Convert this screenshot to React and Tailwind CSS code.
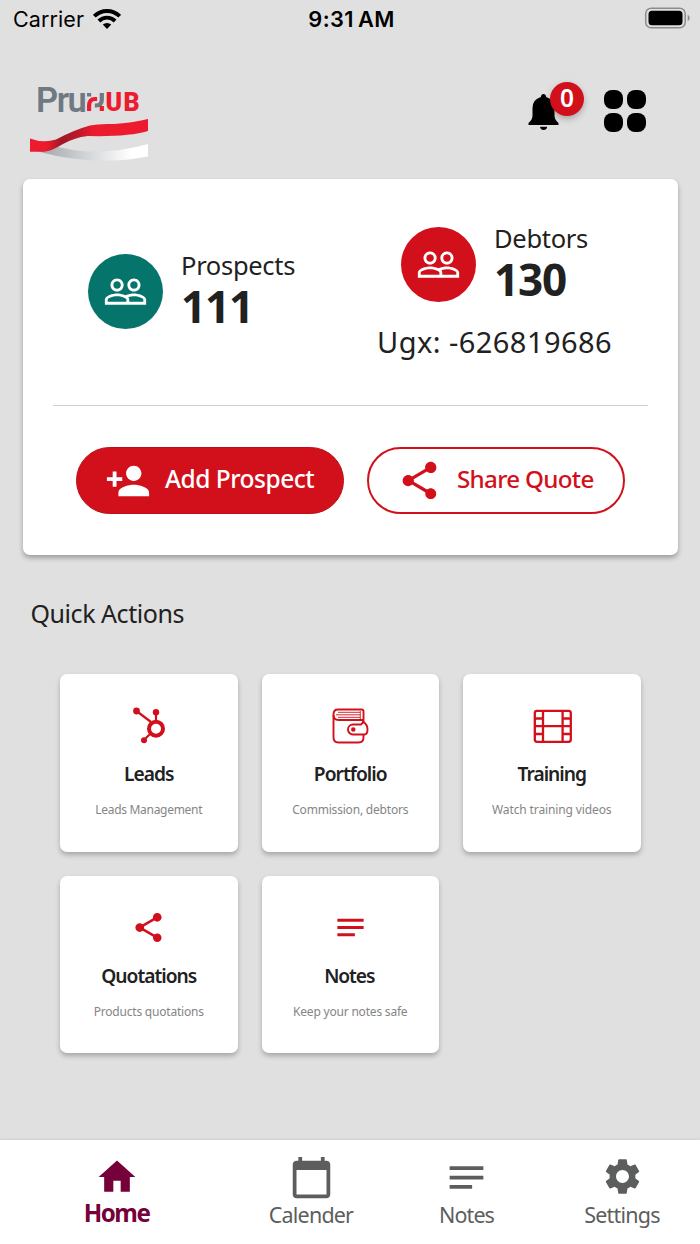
import { MdHome, MdCalendarToday, MdNotes, MdSettings, MdShare, MdPersonAdd, MdPeopleOutline } from "react-icons/md";

function StatusBar() {
  return (
    <div className="grid h-[40px] grid-cols-[1fr_auto_1fr] items-center pl-[13px] pr-[10px] font-['Inter',sans-serif] text-black">
      <div className="flex items-center gap-[9px]">
        <span className="-mt-[2px] text-[21.500px] leading-[40px] tracking-[0.100px]">Carrier</span>
        <svg className="-mt-[3px] h-[20px] w-[28px]" viewBox="0 0 28 20">
          <g fill="none" stroke="#000" strokeWidth="3.900">
            <path d="M1.300 7.200a18 18 0 0 1 25.400 0" />
            <path d="M5.900 12a11.500 11.500 0 0 1 16.200 0" />
          </g>
          <path d="M14 20l-4.200-4.400a6 6 0 0 1 8.400 0z" />
        </svg>
      </div>
      <span className="-mt-[2px] text-[21.800px] font-semibold leading-[40px] tracking-[0.400px]">9:31<span className="ml-[4px]">AM</span></span>
      <svg className="-mt-[5px] h-[22px] w-[46px] justify-self-end" viewBox="0 0 46 22">
        <rect x="1.700" y="1.200" width="39.500" height="19.600" rx="5.500" fill="none" stroke="#8c8c8c" strokeWidth="1.500" />
        <rect x="4.500" y="3.800" width="34" height="14.400" rx="3.500" />
        <path d="M43.700 7.500q4 3.500 0 7z" fill="#8c8c8c" />
      </svg>
    </div>
  );
}

function Logo() {
  return (
    <div className="w-[118px]">
      <div className="flex h-[40px] items-start pl-[6px] pt-[2px] font-['Roboto',sans-serif]">
        <span className="w-[51px] shrink-0 text-[34.500px] font-semibold leading-[40px] tracking-[-1.500px] text-[#6f7983]">Pru</span>
        <svg className="mt-[13px] h-[18px] w-[17px] shrink-0" viewBox="0 0 17 18" fill="none" strokeWidth="4.200">
          <path d="M2.100 0v3.500M14.800 0v6.500q0 6-5.800 6H7.800" stroke="#6f7983" />
          <path d="M2.100 18v-5.500q0-6.500 6-6.500h2M14.800 18v-5" stroke="#ed1b2e" />
        </svg>
        <span className="ml-[1.500px] shrink-0 text-[25px] font-black leading-[45px] tracking-[1.500px] text-[#ed1b2e]">UB</span>
      </div>
      <svg className="block h-[44px] w-[118px]" viewBox="0 0 118 44">
        <defs>
          <linearGradient id="silver">
            <stop offset="0.050" stopColor="#a4aaae" />
            <stop offset="0.450" stopColor="#d3d6d8" />
            <stop offset="0.850" stopColor="#fff" />
          </linearGradient>
          <linearGradient id="ribbon">
            <stop offset="0.140" stopColor="#ed1b2e" />
            <stop offset="0.270" stopColor="#a01725" />
            <stop offset="0.420" stopColor="#bf1a2b" />
            <stop offset="0.540" stopColor="#ed1b2e" />
          </linearGradient>
        </defs>
        <path d="M8 33.500L24 28Q68 40 118 26V38.500Q64 49 8 33.500Z" fill="url(#silver)" />
        <path d="M0 20.500Q13 25.500 26 21.500Q45 11.500 60 7.500Q68 5.500 84 6Q102 5 118 1V13Q98 19 58 18Q44 19.500 32 26.500Q22 33 14 33.700H0Z" fill="url(#ribbon)" />
      </svg>
    </div>
  );
}

function BellIcon() {
  return (
    <svg className="h-[38px] w-[31px]" viewBox="0 0 31 38">
      <path d="M15.500 1q2.300 0 2.700 3Q26.500 6.500 26.500 15v7.500q0 4 4 7.500v2H.5v-2q4-3.500 4-7.500V15q0-8.500 8.300-11 .4-3 2.700-3z" />
      <path d="M12 33.700h7.200q-.6 3.300-3.600 3.300T12 33.700z" />
    </svg>
  );
}

function Header() {
  return (
    <header className="flex h-[139px] items-start justify-between pl-[30px] pr-[54px] pt-[38px]">
      <Logo />
      <div className="flex items-start pt-[3px]">
        <div className="relative mt-[12px] h-[38px] w-[31px]">
          <BellIcon />
          <span className="absolute left-[22px] top-[-11px] flex h-[34px] w-[34px] items-center justify-center rounded-full bg-[#d2101b] text-[24.500px] font-semibold leading-[34px] text-white shadow-[0_3px_6px_rgba(0,0,0,0.250)]">
            <span className="-mt-[3px]">0</span>
          </span>
        </div>
        <div className="ml-[45px] mt-[9px] grid grid-cols-2 gap-[4px]">
          <i className="size-[19px] rounded-[8px] bg-black" />
          <i className="size-[19px] rounded-[8px] bg-black" />
          <i className="size-[19px] rounded-[8px] bg-black" />
          <i className="size-[19px] rounded-[8px] bg-black" />
        </div>
      </div>
    </header>
  );
}

function Stat({ label, value, badge }) {
  return (
    <div className="flex">
      <div className={`flex size-[75px] items-center justify-center rounded-full text-white ${badge}`}>
        <MdPeopleOutline size={45} />
      </div>
      <div className="ml-[17px] flex flex-col">
        <span className="-mt-[5px] ml-[1px] text-[25.500px] leading-[32px] tracking-[-0.300px]">{label}</span>
        <span className="ml-[1px] text-[44px] font-bold leading-[50px] tracking-[-1.200px]">{value}</span>
      </div>
    </div>
  );
}

function SummaryCard() {
  return (
    <section className="mx-[23px] h-[376px] w-[655px] rounded-[7px] bg-white px-[30px] shadow-[0_3px_5px_rgba(0,0,0,0.300)]">
      <div className="flex h-[227px] border-b border-[#cfcfcf]">
        <div className="w-[324px] pl-[35px] pt-[75px]">
          <Stat label="Prospects" value="111" badge="bg-[#05756c]" />
        </div>
        <div className="pt-[48px]">
          <div className="pl-[24px]">
            <Stat label="Debtors" value="130" badge="bg-[#d2101b]" />
          </div>
          <p className="mt-[18px] whitespace-nowrap text-[29px] leading-[40px] tracking-[0.450px]">Ugx: -626819686</p>
        </div>
      </div>
      <div className="flex gap-[23px] pl-[23px] pt-[41px]">
        <button className="flex h-[67px] w-[268px] items-center rounded-full border border-[#bd0d18] bg-[#d2101b] pl-[28px] text-[24.500px] font-medium tracking-[-0.500px] text-white">
          <MdPersonAdd size={46} />
          <span className="-mt-[3px] ml-[14px] whitespace-nowrap">Add Prospect</span>
        </button>
        <button className="flex h-[67px] w-[258px] items-center rounded-full border-2 border-[#d2101b] pl-[28px] text-[24.200px] font-medium tracking-[-0.700px] text-[#d2101b]">
          <MdShare size={45} />
          <span className="-mt-[3px] ml-[15px] whitespace-nowrap">Share Quote</span>
        </button>
      </div>
    </section>
  );
}

function NetworkIcon() {
  return (
    <svg className="h-[40px] w-[40px]" viewBox="0 0 40 40" fill="none" stroke="#d2101b">
      <path d="M7.500 5L22 16M27 6v11M21 28l-6 6" strokeWidth="2.200" />
      <circle cx="27" cy="22.700" r="7" strokeWidth="4" />
      <g fill="#d2101b" stroke="none">
        <circle cx="7.500" cy="5" r="3.400" />
        <circle cx="27" cy="6.300" r="3.200" />
        <circle cx="15" cy="34.200" r="3" />
      </g>
    </svg>
  );
}

function WalletIcon() {
  return (
    <svg className="h-[40px] w-[40px]" viewBox="0 0 40 40" fill="none" stroke="#d2101b" strokeWidth="1.900">
      <path d="M33.500 17V5.500q0-2-2-2H8q-4.500 0-4.500 5v23q0 5 5 5h20q5 0 5-5V29" />
      <path d="M3.500 9q0 5 5 5H33" />
      <path d="M8 6.300h22M6 8.800h24M8 11.300h22M30.300 5v8" strokeWidth="0.900" />
      <path d="M23 18.500h8q2-1.500 2-3 4.500 3 4.500 8t-3 5H23a5 5 0 0 1 0-10z" />
      <circle cx="23.300" cy="23.600" r="1.300" fill="#d2101b" />
    </svg>
  );
}

function FilmIcon() {
  return (
    <svg className="h-[40px] w-[40px]" viewBox="0 0 40 40" fill="none" stroke="#d2101b" strokeWidth="2.300">
      <rect x="2.800" y="4.800" width="36" height="31" rx="2.200" />
      <path d="M11 5v31M30.600 5v31M11 20.200h20M2.800 12.500h8M2.800 20.200h8M2.800 28h8M31 12.500h8M31 20.200h8M31 28h8" />
    </svg>
  );
}

function Tile({ icon, title, titleClass, text, textClass }) {
  return (
    <div className="flex h-[177.500px] flex-col items-center rounded-[7px] bg-white pt-[31px] shadow-[0_3px_5px_rgba(0,0,0,0.250)]">
      <div className="flex h-[42px] items-center justify-center">{icon}</div>
      <h3 className={`mt-[13px] whitespace-nowrap text-[19.200px] font-semibold leading-[28px] ${titleClass}`}>{title}</h3>
      <p className={`mt-[12px] whitespace-nowrap text-[12px] leading-[20px] text-[#858585] ${textClass}`}>{text}</p>
    </div>
  );
}

function NavItem({ icon, label, className }) {
  return (
    <a className={`flex flex-col items-center whitespace-nowrap pt-[15px] ${className}`}>
      <span className="flex h-[45px] items-start">{icon}</span>
      {label}
    </a>
  );
}

export default function App() {
  return (
    <div className="flex h-[1244px] w-[700px] flex-col overflow-hidden bg-[#e0e0e0] font-['Noto_Sans',sans-serif] text-[#212121]">
      <StatusBar />
      <Header />
      <SummaryCard />
      <h2 className="ml-[30.500px] mt-[40px] text-[25px] leading-[36px] tracking-[-0.450px]">Quick Actions</h2>
      <div className="mt-[43px] grid grid-cols-[177.500px_177.500px_177.500px] gap-[24px] pl-[60px]">
        <Tile icon={<NetworkIcon />} title="Leads" titleClass="tracking-[-1px]" text="Leads Management" textClass="tracking-[-0.300px]" />
        <Tile icon={<WalletIcon />} title="Portfolio" titleClass="tracking-[-0.950px]" text="Commission, debtors" textClass="tracking-[-0.200px]" />
        <Tile icon={<FilmIcon />} title="Training" titleClass="tracking-[-1px]" text="Watch training videos" textClass="tracking-[-0.120px]" />
        <Tile icon={<MdShare size={35} color="#d2101b" />} title="Quotations" titleClass="tracking-[-1px]" text="Products quotations" textClass="tracking-[-0.200px]" />
        <Tile icon={<MdNotes size={35} color="#d2101b" />} title="Notes" titleClass="tracking-[-1.100px] pr-[2px]" text="Keep your notes safe" textClass="tracking-[-0.200px]" />
      </div>
      <nav className="mt-auto grid h-[104px] grid-cols-[234px_154px_158px_152px] bg-white text-[21.500px] leading-[30px] text-[#5c5e5e] shadow-[0_-1px_2px_rgba(0,0,0,0.080)]">
        <NavItem icon={<MdHome size={44} />} label="Home" className="pr-[1px] text-[24.200px] leading-[26px] font-bold tracking-[-1.500px] text-[#75003a]" />
        <NavItem icon={<MdCalendarToday size={45} />} label="Calender" className="tracking-[-0.800px]" />
        <NavItem icon={<MdNotes size={45} />} label="Notes" className="pr-[1px] tracking-[-0.900px]" />
        <NavItem icon={<MdSettings size={43} />} label="Settings" className="tracking-[-0.800px]" />
      </nav>
    </div>
  );
}
